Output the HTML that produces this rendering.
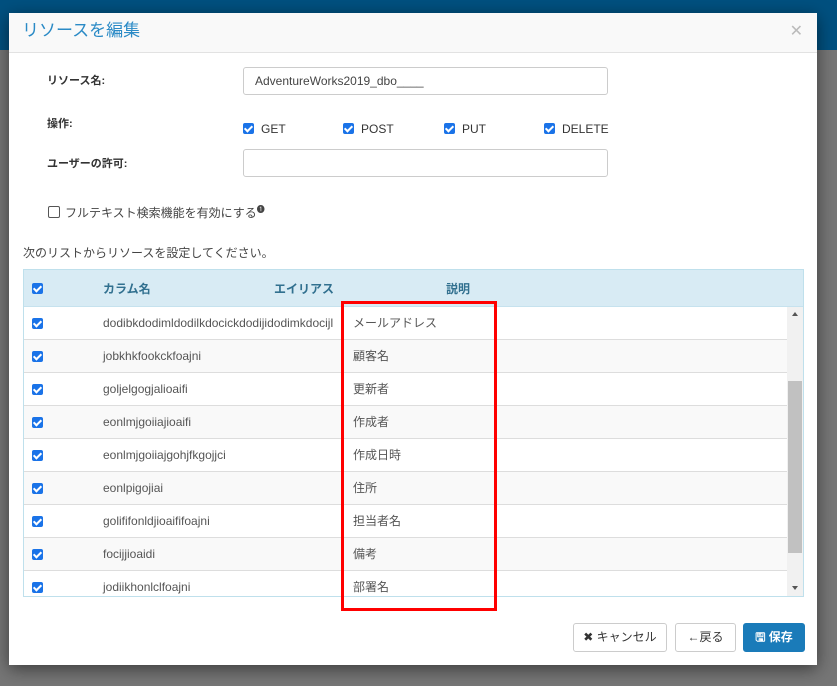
<!DOCTYPE html><html><head><meta charset="utf-8"><style>
body{margin:0;width:837px;height:686px;overflow:hidden;background:#767676;font-family:"Liberation Sans","Noto Sans CJK JP",sans-serif;position:relative}
.top{position:absolute;left:0;top:0;width:837px;height:50px;background:#00507f}
.modal{position:absolute;left:9px;top:13px;width:808px;height:652px;background:#fff;box-shadow:0 4px 16px rgba(0,0,0,.5)}
.hdr{height:39px;background:#f9f9f9;border-bottom:1px solid #e2e2e2;position:relative}
.hdr .t{position:absolute;left:13px;top:6px;font-size:17px;line-height:24px;color:#2a8ac6}
.hdr .x{position:absolute;right:14px;top:8px;color:#bbb;font-size:16px}
.a{position:absolute;font-size:12px;line-height:16px;color:#333}
.b{font-weight:bold;font-size:11px}
.inp{position:absolute;border:1px solid #ccc;border-radius:3px;background:#fff;height:26px}
.cb{position:absolute;width:11px;height:11px;border-radius:2px;background:#1a73e8}
.cb:after{content:"";position:absolute;left:3px;top:1px;width:3px;height:6px;border:solid #fff;border-width:0 2px 2px 0;transform:rotate(45deg)}
.ecb{position:absolute;width:10px;height:10px;border:1px solid #555;border-radius:2px}
.tbl{position:absolute;left:14px;top:256px;width:779px;height:326px;border:1px solid #bfe0ec;overflow:hidden}
.th{height:36px;background:#d8ebf4;position:relative;border-bottom:1px solid #c6e2ee}
.th span{position:absolute;top:11px;font-size:12px;line-height:16px;font-weight:bold;color:#31708f}
.row{height:32px;border-bottom:1px solid #ddd;position:relative;font-size:12px;line-height:16px;color:#555}
.row:nth-child(even){background:#f9f9f9}
.row span{position:absolute;top:8px}
.sb{position:absolute;right:0;top:37px;width:16px;height:289px;background:#f1f1f1}
.th2{position:absolute;left:1px;top:74px;width:14px;height:172px;background:#c1c1c1}
.btn{position:absolute;top:610px;height:27px;border:1px solid #ccc;border-radius:3px;background:#fff;font-size:12px;color:#333;line-height:27px;text-align:center;white-space:nowrap}
</style></head><body>
<div class="top"></div>
<div class="modal">
<div class="hdr"><div class="t">リソースを編集</div><div class="x">✕</div></div>
<div class="a b" style="left:38px;top:60px">リソース名:</div>
<div class="inp" style="left:234px;top:54px;width:363px"><span style="position:absolute;left:11px;top:6px;font-size:12px;color:#444">AdventureWorks2019_dbo____</span></div>
<div class="a b" style="left:38px;top:103px">操作:</div>
<div class="cb" style="left:234px;top:110px"></div><div class="a" style="left:252px;top:108px">GET</div>
<div class="cb" style="left:334px;top:110px"></div><div class="a" style="left:352px;top:108px">POST</div>
<div class="cb" style="left:435px;top:110px"></div><div class="a" style="left:453px;top:108px">PUT</div>
<div class="cb" style="left:535px;top:110px"></div><div class="a" style="left:553px;top:108px">DELETE</div>
<div class="a b" style="left:38px;top:143px">ユーザーの許可:</div>
<div class="inp" style="left:234px;top:136px;width:363px"></div>
<div class="ecb" style="left:39px;top:193px"></div>
<div class="a" style="left:56px;top:189px;color:#444">フルテキスト検索機能を有効にする<sup style="font-size:8px">❶</sup></div>
<div class="a" style="left:14px;top:232px;color:#444">次のリストからリソースを設定してください。</div>
<div class="tbl">
<div class="th"><div class="cb" style="left:8px;top:13px"></div><span style="left:79px">カラム名</span><span style="left:250px">エイリアス</span><span style="left:422px">説明</span></div>
<div>
<div class="row"><div class="cb" style="left:8px;top:11px"></div><span style="left:79px">dodibkdodimldodilkdocickdodijidodimkdocijl</span><span style="left:329px">メールアドレス</span></div>
<div class="row"><div class="cb" style="left:8px;top:11px"></div><span style="left:79px">jobkhkfookckfoajni</span><span style="left:329px">顧客名</span></div>
<div class="row"><div class="cb" style="left:8px;top:11px"></div><span style="left:79px">goljelgogjalioaifi</span><span style="left:329px">更新者</span></div>
<div class="row"><div class="cb" style="left:8px;top:11px"></div><span style="left:79px">eonlmjgoiiajioaifi</span><span style="left:329px">作成者</span></div>
<div class="row"><div class="cb" style="left:8px;top:11px"></div><span style="left:79px">eonlmjgoiiajgohjfkgojjci</span><span style="left:329px">作成日時</span></div>
<div class="row"><div class="cb" style="left:8px;top:11px"></div><span style="left:79px">eonlpigojiai</span><span style="left:329px">住所</span></div>
<div class="row"><div class="cb" style="left:8px;top:11px"></div><span style="left:79px">golififonldjioaififoajni</span><span style="left:329px">担当者名</span></div>
<div class="row"><div class="cb" style="left:8px;top:11px"></div><span style="left:79px">focijjioaidi</span><span style="left:329px">備考</span></div>
<div class="row"><div class="cb" style="left:8px;top:11px"></div><span style="left:79px">jodiikhonlclfoajni</span><span style="left:329px">部署名</span></div>
</div>
<div class="sb"><div style="position:absolute;left:5px;top:5px;border:3px solid transparent;border-bottom:4px solid #555;border-top:0"></div><div class="th2"></div><div style="position:absolute;left:5px;bottom:6px;border:3px solid transparent;border-top:4px solid #555;border-bottom:0"></div></div>
</div>
<div style="position:absolute;left:332px;top:288px;width:150px;height:304px;border:3px solid #f00"></div>
<div class="btn" style="left:564px;width:92px">✖ キャンセル</div>
<div class="btn" style="left:666px;width:59px"><b>←</b>戻る</div>
<div class="btn" style="left:734px;width:60px;background:#1a7bb9;border-color:#1a7bb9;color:#fff;font-weight:bold">🖫 保存</div>
</div>
</body></html>
